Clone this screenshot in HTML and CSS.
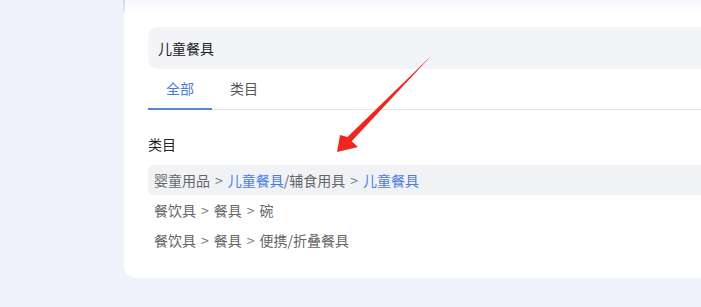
FILE: index.html
```html
<!DOCTYPE html>
<html lang="zh-CN">
<head>
    <meta charset="UTF-8">
    <meta name="viewport" content="width=device-width, initial-scale=1.0">
    <title>类目搜索</title>
    <link rel="stylesheet" href="styles.css">
</head>
<body>
    <div class="panel">
        <div class="search-box">儿童餐具</div>
        <div class="tabs">
            <div class="tab active">全部</div>
            <div class="tab">类目</div>
        </div>
        <h3 class="section-title">类目</h3>
        <ul class="cat-list">
            <li class="cat-item selected">婴童用品<span class="sep">&gt;</span><span class="hl">儿童餐具</span>/辅食用具<span class="sep">&gt;</span><span class="hl">儿童餐具</span></li>
            <li class="cat-item">餐饮具<span class="sep">&gt;</span>餐具<span class="sep">&gt;</span>碗</li>
            <li class="cat-item">餐饮具<span class="sep">&gt;</span>餐具<span class="sep">&gt;</span>便携/折叠餐具</li>
        </ul>
    </div>

    <!-- annotation arrow -->
    <svg class="arrow" width="120" height="120" viewBox="0 0 120 120">
        <polygon fill="#f0261e" points="17,112 20,95 27.5,97 112,15 31.7,101.2 38,107"/>
    </svg>
</body>
</html>
```

FILE: styles.css
```css
body {
    margin: 0;
    background-color: #eff2fa;
    font-family: 'Noto Sans CJK SC', 'Noto Sans', sans-serif;
    font-size: 14px;
    width: 701px;
    height: 307px;
    overflow: hidden;
    position: relative;
}
.panel {
    margin-left: 124px;
    height: 278px;
    box-sizing: border-box;
    padding: 27px 0 0 24px;
    background: linear-gradient(#f5f7fe 0, #ffffff 13px);
    border-bottom-left-radius: 12px;
    position: relative;
}
.panel::before {
    content: '';
    position: absolute;
    left: -1px;
    top: 0;
    width: 2px;
    height: 13px;
    background: linear-gradient(#c9d6f5, #e6ecfb);
}
.search-box {
    height: 42px;
    line-height: 42px;
    padding-left: 10px;
    background-color: #f3f4f7;
    border-radius: 10px 0 0 10px;
    color: #222;
}
.tabs {
    display: flex;
    border-bottom: 1px solid #e4e5e8;
    height: 40px;
}
.tab {
    padding: 0 18px;
    line-height: 39px;
    color: #555;
    box-sizing: border-box;
}
.tab.active {
    color: #4a7bd6;
    border-bottom: 2px solid #5784d4;
    margin-bottom: -1px;
}
.section-title {
    margin: 24px 0 11px;
    font-size: 14px;
    font-weight: normal;
    line-height: 20px;
    color: #222;
}
.cat-list {
    list-style: none;
    margin: 0;
    padding: 0;
}
.cat-item {
    height: 30px;
    line-height: 30px;
    padding-left: 6px;
    color: #666;
}
.cat-item.selected {
    background-color: #f1f2f6;
    border-radius: 6px 0 0 6px;
}
.sep {
    padding: 0 5px;
    color: #777;
}
.hl {
    color: #4b7ce2;
}
.arrow {
    position: absolute;
    left: 320px;
    top: 40px;
}
```
